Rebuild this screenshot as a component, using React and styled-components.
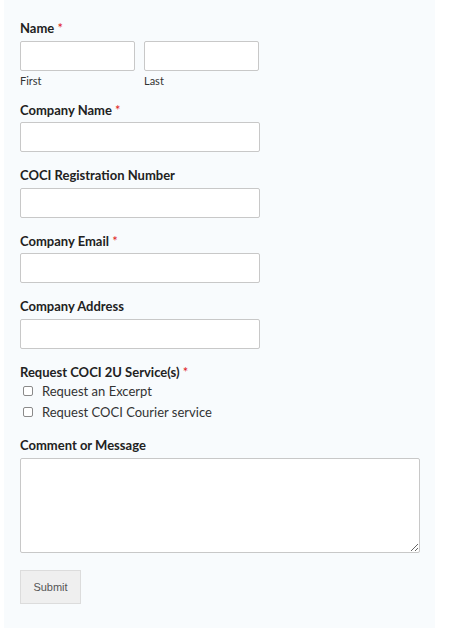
import React from "react";
import styled, { createGlobalStyle } from "styled-components";

const GlobalStyle = createGlobalStyle`
  html, body {
    margin: 0;
    padding: 0;
    background: #ffffff;
  }
  body {
    font-family: Lato, "Open Sans", sans-serif;
    color: #222;
  }
`;

export default function App() {
  return (
    <>
      <GlobalStyle />
      <StyledPanel>
        <StyledForm onSubmit={(e) => e.preventDefault()}>
          <StyledField>
            <StyledLabel>
              Name <StyledRequired>*</StyledRequired>
            </StyledLabel>
            <StyledNameRow>
              <StyledNamePart>
                <StyledInput type="text" $width="115px" />
                <StyledSubLabel>First</StyledSubLabel>
              </StyledNamePart>
              <StyledNamePart>
                <StyledInput type="text" $width="115px" />
                <StyledSubLabel>Last</StyledSubLabel>
              </StyledNamePart>
            </StyledNameRow>
          </StyledField>

          <StyledField>
            <StyledLabel>
              Company Name <StyledRequired>*</StyledRequired>
            </StyledLabel>
            <StyledInput type="text" />
          </StyledField>

          <StyledField>
            <StyledLabel>COCI Registration Number</StyledLabel>
            <StyledInput type="text" />
          </StyledField>

          <StyledField>
            <StyledLabel>
              Company Email <StyledRequired>*</StyledRequired>
            </StyledLabel>
            <StyledInput type="email" />
          </StyledField>

          <StyledField>
            <StyledLabel>Company Address</StyledLabel>
            <StyledInput type="text" />
          </StyledField>

          <StyledField>
            <StyledLabel $tight>
              Request COCI 2U Service(s) <StyledRequired>*</StyledRequired>
            </StyledLabel>
            <StyledCheckRow>
              <StyledCheckbox type="checkbox" />
              Request an Excerpt
            </StyledCheckRow>
            <StyledCheckRow>
              <StyledCheckbox type="checkbox" />
              Request COCI Courier service
            </StyledCheckRow>
          </StyledField>

          <StyledField>
            <StyledLabel>Comment or Message</StyledLabel>
            <StyledTextarea />
          </StyledField>

          <StyledButton type="submit">Submit</StyledButton>
        </StyledForm>
      </StyledPanel>
    </>
  );
}

const StyledPanel = styled.div`
  margin-left: 4px;
  width: 431px;
  min-height: 628px;
  background: #f8fbfd;
  box-sizing: border-box;
  padding: 20px 16px;
`;

const StyledForm = styled.form`
  display: flex;
  flex-direction: column;
  align-items: flex-start;
`;

const StyledField = styled.div`
  display: flex;
  flex-direction: column;
  align-items: flex-start;
  margin-bottom: 15px;
`;

const StyledLabel = styled.label`
  font-size: 13px;
  font-weight: 700;
  line-height: 16px;
  color: #222;
  margin-bottom: ${(props) => (props.$tight ? "1.5px" : "4.5px")};
`;

const StyledRequired = styled.span`
  color: #e02020;
  font-weight: 400;
`;

const StyledNameRow = styled.div`
  display: flex;
  gap: 9px;
`;

const StyledNamePart = styled.div`
  display: flex;
  flex-direction: column;
`;

const StyledSubLabel = styled.span`
  font-size: 11px;
  line-height: 13px;
  margin-top: 3px;
  color: #333;
`;

const StyledInput = styled.input`
  box-sizing: border-box;
  width: ${(props) => props.$width || "240px"};
  height: 30px;
  margin: 0;
  border: 1px solid #c8c8c8;
  border-radius: 2px;
  background: #fff;
  padding: 4px 6px;
  font-family: inherit;
  font-size: 13px;
`;

const StyledCheckRow = styled.label`
  display: flex;
  align-items: center;
  height: 20.5px;
  font-size: 13px;
  color: #333;
`;

const StyledCheckbox = styled.input`
  appearance: none;
  box-sizing: border-box;
  width: 10px;
  height: 10px;
  margin: 0 9px 0 3px;
  border: 1px solid #8a8a8a;
  border-radius: 2px;
  background: #fff;
`;

const StyledTextarea = styled.textarea`
  box-sizing: border-box;
  width: 400px;
  height: 95px;
  margin: 0;
  border: 1px solid #c8c8c8;
  border-radius: 2px;
  background: #fff;
  font-family: inherit;
  font-size: 13px;
`;

const StyledButton = styled.button`
  margin-top: 2px;
  width: 61px;
  height: 34px;
  border: 1px solid #dcdcdc;
  background: #efefef;
  color: #555;
  font-family: "Liberation Sans", Arial, sans-serif;
  font-size: 11px;
  padding: 0;
`;
